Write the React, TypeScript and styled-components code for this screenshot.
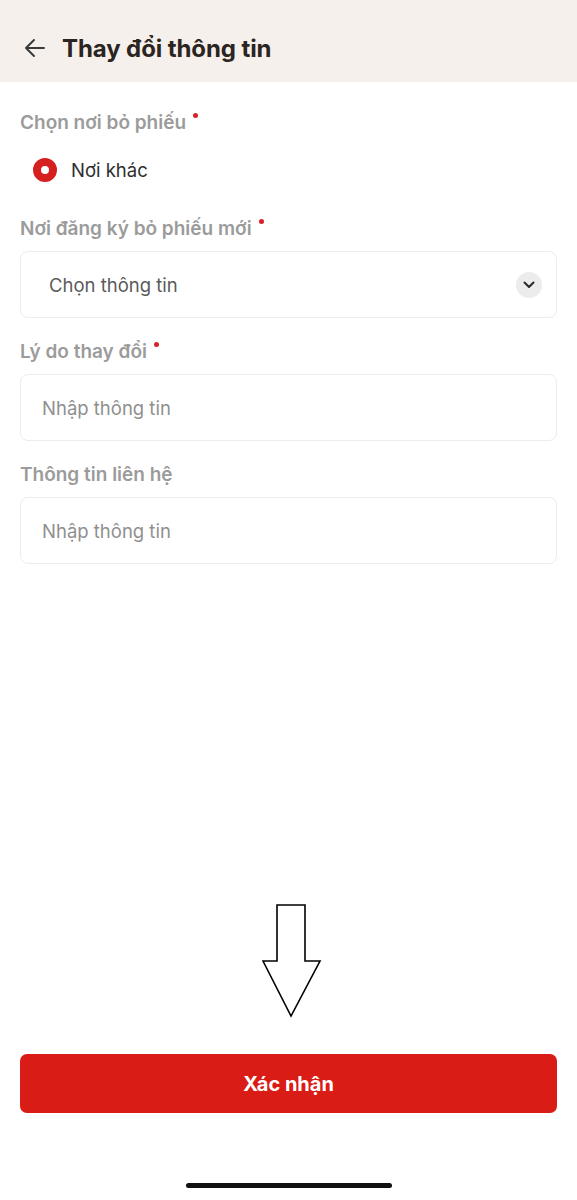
import React from "react";
import styled, { createGlobalStyle } from "styled-components";

const Global = createGlobalStyle`
  html, body { margin: 0; padding: 0; background: #ffffff; }
  body { font-family: Inter, "Noto Sans", "Liberation Sans", sans-serif; -webkit-font-smoothing: antialiased; }
  * { box-sizing: border-box; }
`;

const Page = styled.div`
  width: 577px;
  height: 1200px;
  display: flex;
  flex-direction: column;
  background: #ffffff;
`;

const Header = styled.header`
  height: 82px;
  background: #f5f0ec;
  display: flex;
  align-items: center;
  padding: 14px 0 0 22px;
  gap: 14px;
`;

const BackButton = styled.button`
  border: 0;
  background: transparent;
  padding: 0;
  width: 26px;
  height: 26px;
  display: flex;
  align-items: center;
  justify-content: center;
  color: #3a3a3a;
`;

const Title = styled.h1`
  margin: 0;
  font-size: 24px;
  font-weight: 700;
  color: #2b2421;
  letter-spacing: -0.1px;
`;

const Form = styled.div`
  display: flex;
  flex-direction: column;
  padding: 29px 20px 0 20px;
`;

const Label = styled.div<{ $gap: number }>`
  margin-top: ${(p) => p.$gap}px;
  height: 24px;
  line-height: 24px;
  font-size: 19px;
  font-weight: 600;
  color: #9b9b9b;
  display: flex;
  align-items: flex-start;
`;

const Required = styled.span`
  width: 5px;
  height: 5px;
  border-radius: 50%;
  background: #d8222a;
  margin-left: 7px;
  margin-top: 2px;
`;

const RadioRow = styled.div`
  margin-top: 23px;
  margin-left: 13px;
  height: 24px;
  display: flex;
  align-items: center;
  gap: 14px;
  font-size: 18.5px;
  color: #2e2e2e;
`;

const RadioDot = styled.span`
  width: 24px;
  height: 24px;
  border-radius: 50%;
  border: 8px solid #d61f1f;
  background: #ffffff;
`;

const Field = styled.div<{ $indent: number }>`
  margin-top: 10px;
  height: 67px;
  border: 1px solid #ececec;
  border-radius: 8px;
  display: flex;
  align-items: center;
  justify-content: space-between;
  padding: 0 14px 0 ${(p) => p.$indent}px;
  font-size: 18.5px;
`;

const Placeholder = styled.span<{ $dark?: boolean }>`
  color: ${(p) => (p.$dark ? "#5a5a5a" : "#8f8f8f")};
`;

const ChevronCircle = styled.span`
  width: 26px;
  height: 26px;
  border-radius: 50%;
  background: #ececec;
  display: flex;
  align-items: center;
  justify-content: center;
`;

const Spacer = styled.div`
  flex: 1;
`;

const ArrowWrap = styled.div`
  display: flex;
  justify-content: center;
  padding-left: 7px;
`;

const Footer = styled.div`
  padding: 36px 20px 0 20px;
`;

const SubmitButton = styled.button`
  width: 100%;
  height: 59px;
  border: 0;
  border-radius: 7px;
  background: #d91c15;
  color: #ffffff;
  font-family: inherit;
  font-size: 20px;
  font-weight: 700;
`;

const HomeArea = styled.div`
  height: 87px;
  display: flex;
  align-items: flex-end;
  justify-content: center;
  padding-bottom: 12px;
`;

const HomeBar = styled.div`
  width: 206px;
  height: 5px;
  border-radius: 3px;
  background: #111111;
`;

export default function App() {
  return (
    <>
      <Global />
      <Page>
        <Header>
          <BackButton aria-label="back">
            <svg width="22" height="20" viewBox="0 0 22 20" fill="none">
              <path d="M20 10H2M10 2L2 10l8 8" stroke="#3a3a3a" strokeWidth="2" strokeLinecap="round" strokeLinejoin="round" />
            </svg>
          </BackButton>
          <Title>Thay đổi thông tin</Title>
        </Header>
        <Form>
          <Label $gap={0}>
            Chọn nơi bỏ phiếu<Required />
          </Label>
          <RadioRow>
            <RadioDot />
            Nơi khác
          </RadioRow>
          <Label $gap={35}>
            Nơi đăng ký bỏ phiếu mới<Required />
          </Label>
          <Field $indent={28}>
            <Placeholder $dark>Chọn thông tin</Placeholder>
            <ChevronCircle>
              <svg width="12" height="8" viewBox="0 0 12 8" fill="none">
                <path d="M1.5 1.5L6 6l4.5-4.5" stroke="#2a2a2a" strokeWidth="2" strokeLinecap="round" strokeLinejoin="round" />
              </svg>
            </ChevronCircle>
          </Field>
          <Label $gap={22}>
            Lý do thay đổi<Required />
          </Label>
          <Field $indent={21}>
            <Placeholder>Nhập thông tin</Placeholder>
          </Field>
          <Label $gap={22}>Thông tin liên hệ</Label>
          <Field $indent={21}>
            <Placeholder>Nhập thông tin</Placeholder>
          </Field>
        </Form>
        <Spacer />
        <ArrowWrap>
          <svg width="60" height="114" viewBox="0 0 60 114" fill="none">
            <path d="M15 1H43V57H58L29 112L1 57H15Z" fill="#ffffff" stroke="#000000" strokeWidth="1.6" strokeLinejoin="miter" />
          </svg>
        </ArrowWrap>
        <Footer>
          <SubmitButton>Xác nhận</SubmitButton>
        </Footer>
        <HomeArea>
          <HomeBar />
        </HomeArea>
      </Page>
    </>
  );
}
